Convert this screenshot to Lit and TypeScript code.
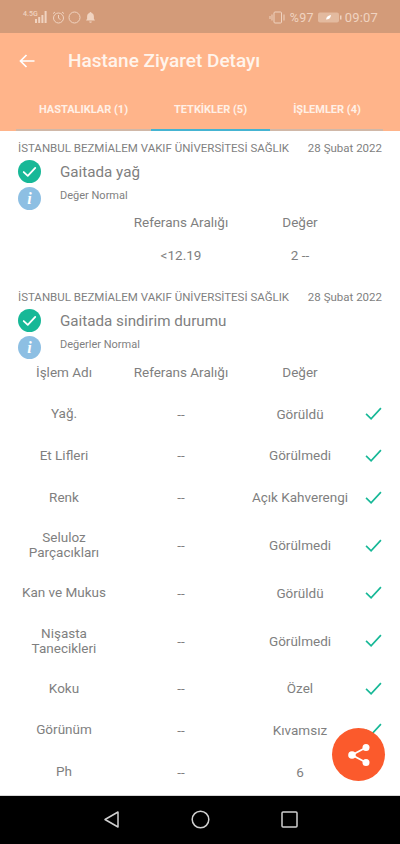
import { LitElement, html, css, svg } from "lit";
import { customElement } from "lit/decorators.js";

const PLACE = "İSTANBUL BEZMİALEM VAKIF ÜNİVERSİTESİ SAĞLIK";
const DATE = "28 Şubat 2022";

const rows: { name: string[]; value: string; h: number }[] = [
  { name: ["Yağ."], value: "Görüldü", h: 41 },
  { name: ["Et Lifleri"], value: "Görülmedi", h: 42 },
  { name: ["Renk"], value: "Açık Kahverengi", h: 42 },
  { name: ["Seluloz", "Parçacıkları"], value: "Görülmedi", h: 54 },
  { name: ["Kan ve Mukus"], value: "Görüldü", h: 41 },
  { name: ["Nişasta", "Tanecikleri"], value: "Görülmedi", h: 55 },
  { name: ["Koku"], value: "Özel", h: 40 },
  { name: ["Görünüm"], value: "Kıvamsız", h: 43 },
  { name: ["Ph"], value: "6", h: 41 },
];

const okIcon = svg`<svg class="round" viewBox="0 0 24 24"><circle cx="12" cy="12" r="12" fill="#17b897"/><path d="M6 12.6l4.2 4L18 8.2" fill="none" stroke="#fff" stroke-width="1.9" stroke-linecap="round" stroke-linejoin="round"/></svg>`;
const infoIcon = html`<span class="info">i</span>`;
const tick = svg`<svg class="tick" viewBox="0 0 18 14"><path d="M1 7.5l5.4 5.2L17 1.2" fill="none" stroke="#17b897" stroke-width="1.8"/></svg>`;

@customElement("app-root")
export class AppRoot extends LitElement {
  static styles = css`
    :host { display: block; width: 400px; height: 844px; font-family: Roboto, "Noto Sans", sans-serif; color: #7d7d7d; }
    .screen { position: relative; height: 844px; display: flex; flex-direction: column; overflow: hidden; background: #fff; }
    .status { height: 33px; flex: none; background: #d39b79; color: #f0d3c0; display: flex; align-items: center; justify-content: space-between; padding: 1px 22px 0 23px; box-sizing: border-box; }
    .status-left, .status-right { display: flex; align-items: center; }
    .status-left { gap: 4px; }
    .status-right { gap: 3px; font-size: 12.5px; letter-spacing: 0.2px; }
    .speed { font-size: 7px; line-height: 7px; width: 12px; margin-right: -4px; margin-top: -6px; font-weight: 500; }
    .status svg { display: block; }
    .dial { margin-left: -1px; }
    .battery { margin-left: 1px; }
    .appbar { height: 57px; flex: none; background: #ffb48a; display: flex; align-items: center; padding: 0 0 2px 18px; box-sizing: border-box; color: #fff; }
    .appbar svg { width: 18px; height: 18px; margin-right: 32px; }
    .appbar h1 { margin: 0; font-size: 19px; font-weight: 500; color: #fff4ec; }
    .tabs { height: 41px; flex: none; background: #ffb48a; position: relative; display: grid; grid-template-columns: 135px 119px 114px; padding: 0 16px; box-sizing: border-box; }
    .tab { display: flex; justify-content: center; padding-top: 13px; font-size: 11px; font-weight: 700; color: #fff0e6; box-sizing: border-box; }
    .tab span { white-space: nowrap; }
    .line { position: absolute; left: 16px; right: 17px; bottom: 0; height: 2px; background: #d0b8a8; }
    .line i { position: absolute; left: 135px; width: 119px; top: 0; bottom: 0; background: #45b4d2; }
    .content { flex: 1; min-height: 0; overflow: hidden; }
    .section { padding: 0 18px; }
    .section + .section { margin-top: 9px; }
    .top { display: flex; justify-content: space-between; align-items: center; height: 33px; font-size: 11.5px; color: #7f7f7f; white-space: nowrap; }
    .title { display: flex; align-items: center; height: 23px; margin-top: -4px; }
    .round { width: 23px; height: 23px; display: block; flex: none; }
    .title b { font-weight: 400; font-size: 15.2px; margin-left: 19px; color: #808080; }
    .note { display: flex; align-items: center; height: 23px; margin-top: 4px; }
    .note em { font-style: normal; font-size: 11px; margin-left: 19px; margin-top: -6px; color: #7f7f7f; }
    .info { width: 23px; height: 23px; border-radius: 50%; background: #8dbfe3; color: #fff; flex: none; display: flex; align-items: center; justify-content: center; font: italic 700 16px "Liberation Serif", serif; }
    .table { margin: 0 -18px; }
    .grid { display: grid; grid-template-columns: 16px 96px 138px 100px 1fr; align-items: center; text-align: center; font-size: 13.5px; color: #7f7f7f; }
    .grid > :first-child { grid-column: 2; }
    .head { height: 33px; margin-top: -5px; }
    .cell-line { line-height: 15px; display: block; }
    .cell-wrap { display: block; }
    .check { display: flex; justify-content: flex-start; padding-left: 15px; }
    .tick { width: 17px; height: 13px; display: block; }
    .first-row { height: 33px; }
    .head2 { height: 26px; }
    .gap { height: 8px; }
    .nav { height: 49px; flex: none; background: #000; border-top: 1px solid #d8d8d8; box-sizing: border-box; display: flex; justify-content: center; align-items: center; gap: 70px; padding-bottom: 1px; }
    .nav svg { width: 19px; height: 19px; display: block; }
    .fab { position: absolute; left: 332px; top: 728px; width: 53px; height: 53px; border-radius: 50%; background: #fb5a2c; display: flex; align-items: center; justify-content: center; }
    .fab svg { width: 28px; height: 28px; display: block; }
  `;

  private header(title: string, note: string) {
    return html`
      <div class="top"><span>${PLACE}</span><span>${DATE}</span></div>
      <div class="title">${okIcon}<b>${title}</b></div>
      <div class="note">${infoIcon}<em>${note}</em></div>
    `;
  }

  render() {
    return html`
      <div class="screen">
        <div class="status">
          <div class="status-left">
            <span class="speed">4.5G</span>
            <svg width="13" height="12" viewBox="0 0 13 12" fill="currentColor"><rect x="0" y="8" width="2" height="4"/><rect x="3.2" y="6" width="2" height="6"/><rect x="6.4" y="4" width="2" height="8"/><rect x="9.6" y="0" width="2" height="12"/></svg>
            <svg width="13" height="13" viewBox="0 0 13 13" fill="none" stroke="currentColor" stroke-width="1"><circle cx="6.5" cy="7" r="5"/><path d="M6.5 4v3.2l2 1.4M1 2.6L3 1M12 2.6L10 1"/></svg>
            <svg class="dial" width="13" height="13" viewBox="0 0 13 13" fill="none" stroke="currentColor" stroke-width="1"><circle cx="6.5" cy="6.5" r="5.5"/></svg>
            <svg width="11" height="13" viewBox="0 0 11 13" fill="currentColor"><path d="M5.5 1a1 1 0 0 1 1 1c1.700.500 2.400 1.900 2.400 3.600v2.200L10 9.500H1l1.100-1.700V5.600c0-1.700.700-3.100 2.400-3.600a1 1 0 0 1 1-1zM4.200 10.500h2.600a1.300 1.300 0 0 1-2.600 0z"/></svg>
          </div>
          <div class="status-right">
            <svg width="18" height="13" viewBox="0 0 18 13" fill="none" stroke="currentColor" stroke-width="1"><rect x="5" y="1" width="7.5" height="11" rx="1"/><path d="M3 3.500v6M1 5v3M15 3.500v6"/></svg>
            <span>%97</span>
            <svg class="battery" width="24" height="11" viewBox="0 0 24 11"><rect x="0" y="0.500" width="21" height="10" rx="2" fill="currentColor" opacity=".55"/><rect x="22" y="3.500" width="1.500" height="4" fill="currentColor"/><path d="M8 7.500c.500-3 2.500-4 5-4.500-.300 3-2 4.500-5 4.500z" fill="#fff"/></svg>
            <span style="font-size:13px">09:07</span>
          </div>
        </div>
        <div class="appbar">
          <svg viewBox="0 0 18 18" fill="none" stroke="#fff" stroke-width="1.7"><path d="M16.500 9H2.500M8.500 3l-6 6 6 6"/></svg>
          <h1>Hastane Ziyaret Detayı</h1>
        </div>
        <div class="tabs">
          <div class="tab"><span>HASTALIKLAR (1)</span></div>
          <div class="tab"><span>TETKİKLER (5)</span></div>
          <div class="tab"><span>İŞLEMLER (4)</span></div>
          <div class="line"><i></i></div>
        </div>
        <div class="content">
          <div class="section">
            ${this.header("Gaitada yağ", "Değer Normal")}
            <div class="table">
              <div class="grid head"><span></span><span>Referans Aralığı</span><span>Değer</span><span></span></div>
              <div class="grid first-row"><span></span><span>&lt;12.19</span><span>2 --</span><span></span></div>
            </div>
          </div>
          <div class="section">
            ${this.header("Gaitada sindirim durumu", "Değerler Normal")}
            <div class="table">
              <div class="grid head2"><span>İşlem Adı</span><span>Referans Aralığı</span><span>Değer</span><span></span></div>
              <div class="gap"></div>
              ${rows.map(
                (r) => html`<div class="grid" style="height:${r.h}px">
                  <span class="cell-wrap">${r.name.map((n) => html`<span class="cell-line">${n}</span>`)}</span>
                  <span>--</span><span>${r.value}</span>
                  <span class="check">${r.name[0] === "Ph" ? "" : tick}</span>
                </div>`
              )}
            </div>
          </div>
        </div>
        <div class="nav">
          <svg viewBox="0 0 19 19" fill="none" stroke="#d0d0d0" stroke-width="1.5"><path d="M16 2v15L3 9.500z" stroke-linejoin="round"/></svg>
          <svg viewBox="0 0 19 19" fill="none" stroke="#d0d0d0" stroke-width="1.5"><circle cx="9.500" cy="9.500" r="8.300"/></svg>
          <svg viewBox="0 0 19 19" fill="none" stroke="#d0d0d0" stroke-width="1.5"><rect x="2" y="2" width="15" height="15" rx="1"/></svg>
        </div>
        <div class="fab">
          <svg viewBox="0 0 28 28" fill="#fff" stroke="#fff"><circle cx="21" cy="6.500" r="3.500" stroke="none"/><circle cx="21" cy="21.500" r="3.500" stroke="none"/><circle cx="7" cy="14" r="3.800" stroke="none"/><path d="M21 6.500L7 14l14 7.500" fill="none" stroke-width="1.800"/></svg>
        </div>
      </div>
    `;
  }
}
